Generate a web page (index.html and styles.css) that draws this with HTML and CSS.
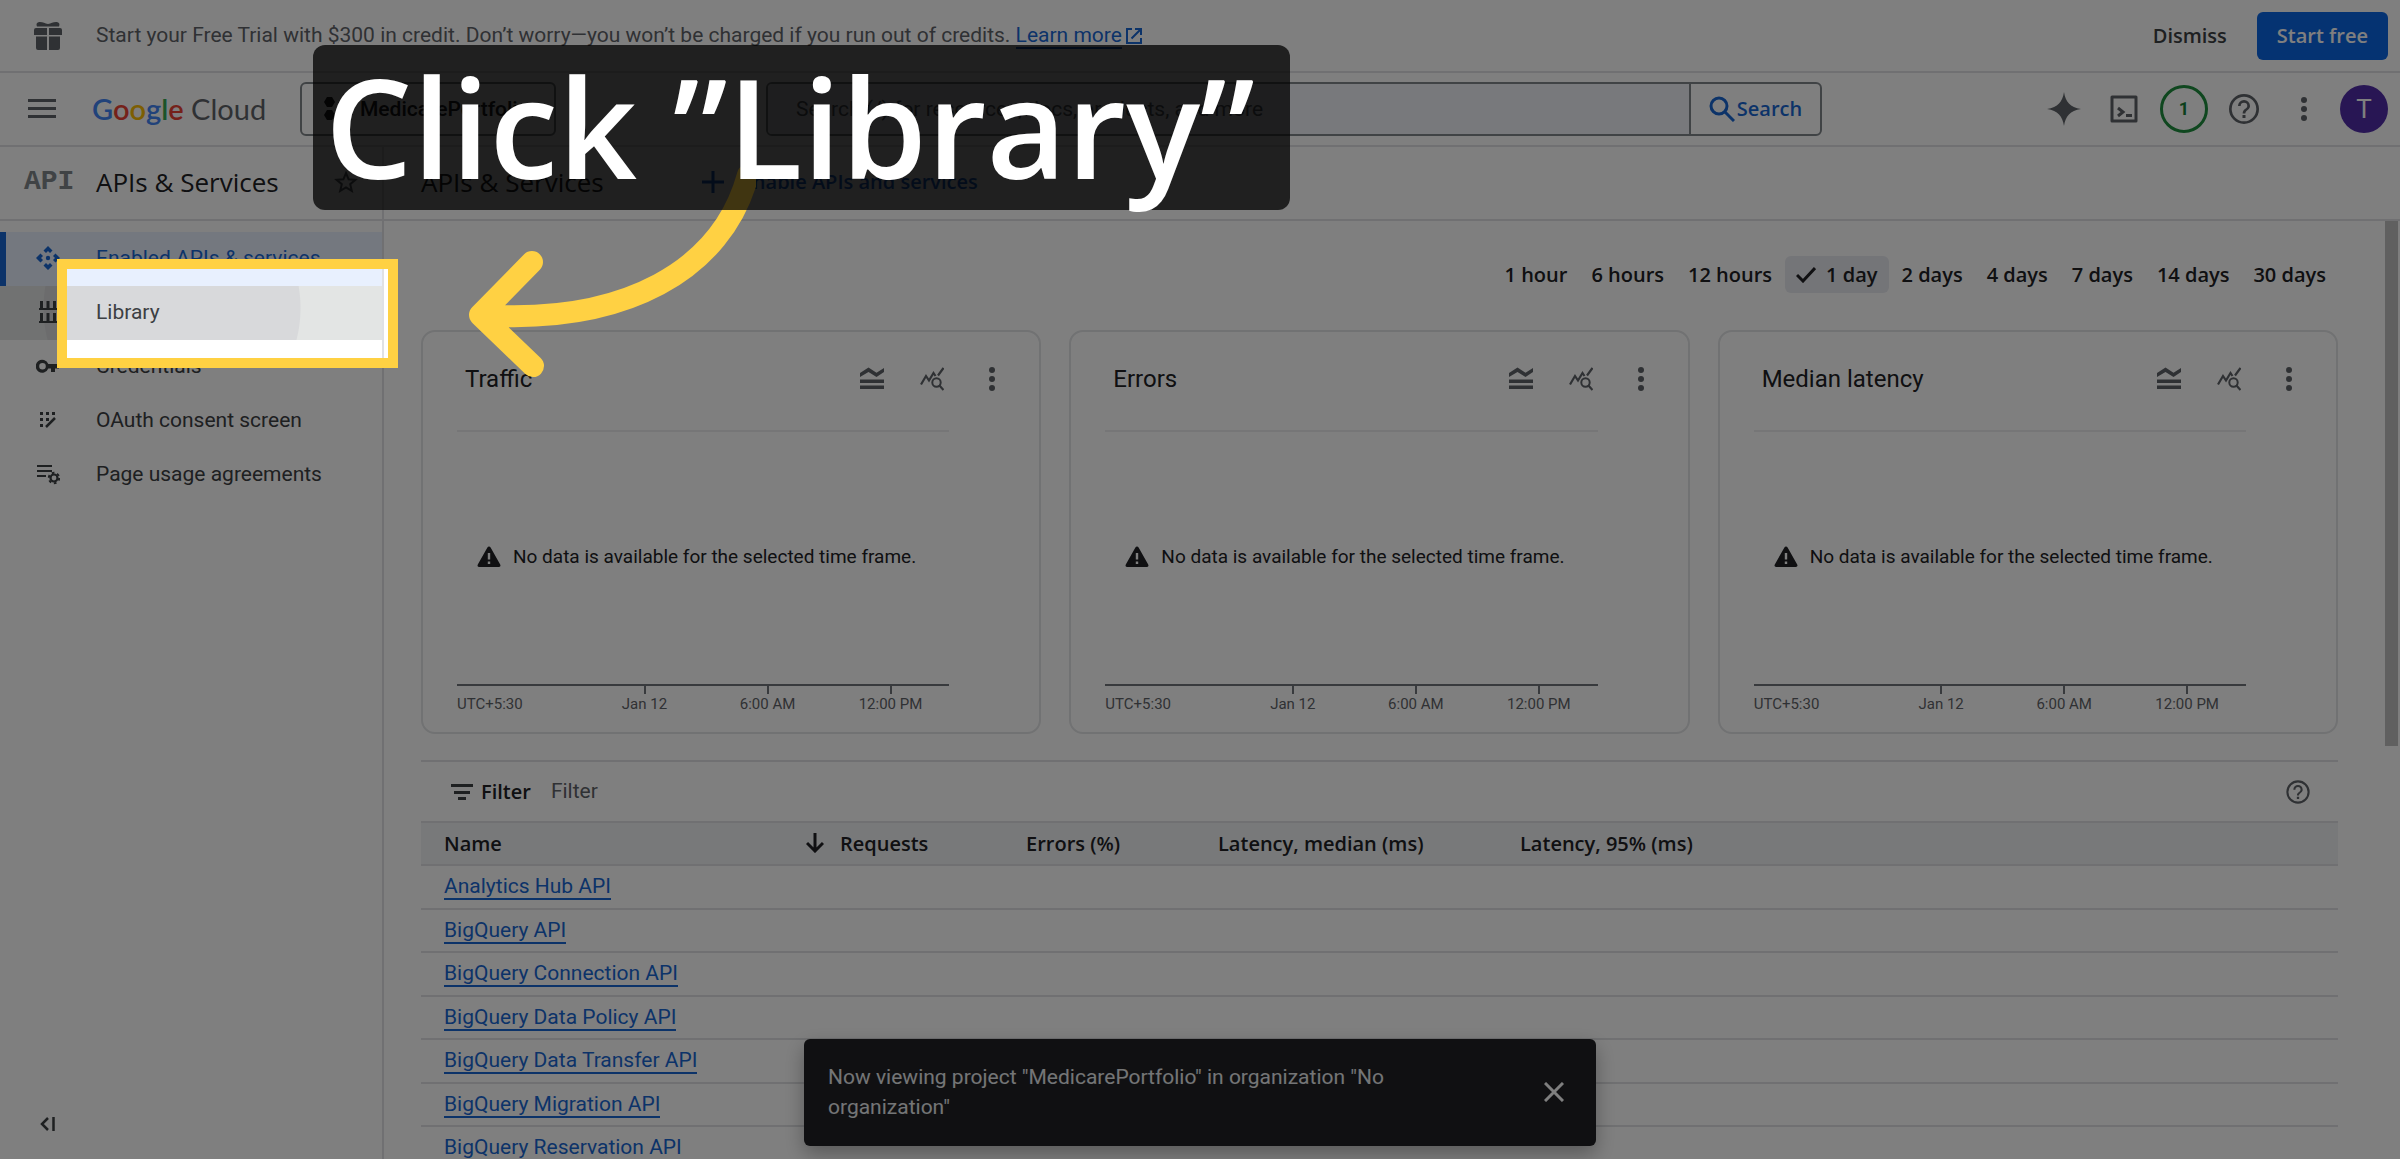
FILE: index.html
```html
<!DOCTYPE html>
<html lang="en">
<head>
<meta charset="utf-8">
<title>APIs &amp; Services – Google Cloud</title>
<meta name="viewport" content="width=device-width, initial-scale=1">
<link rel="stylesheet" href="styles.css">
</head>
<body>
<svg class="sprite" aria-hidden="true">
  <symbol id="i-dots" viewBox="0 0 24 24"><circle cx="12" cy="6" r="2"/><circle cx="12" cy="12" r="2"/><circle cx="12" cy="18" r="2"/></symbol>
  <symbol id="i-help" viewBox="0 0 24 24"><path d="M11 18h2v-2h-2v2zm1-16a10 10 0 1 0 0 20 10 10 0 0 0 0-20zm0 18.200a8.200 8.200 0 1 1 0-16.400 8.200 8.200 0 0 1 0 16.400zM12 6a4 4 0 0 0-4 4h1.800a2.200 2.200 0 1 1 4.400 0c0 2-3.100 1.800-3.100 5h1.800c0-2.200 3.100-2.500 3.100-5a4 4 0 0 0-4-4z"/></symbol>
  <symbol id="i-legend" viewBox="0 0 24 24"><path d="M0 6 8.500 .500l8 5.200L24 1v4l-7.500 5-8-5L0 10zM0 12.500h24V16H0zM0 18.500h24V22H0z"/></symbol>
  <symbol id="i-explore" viewBox="0 0 24 24"><path fill="none" stroke="currentColor" stroke-width="2.200" d="M1 17.500 6 9l3 4.500 4.500-7.500 2 3M18 8.500 23.500 1"/><circle cx="16.500" cy="15.500" r="4.200" fill="none" stroke="currentColor" stroke-width="2"/><path d="m19 18 4.500 5" stroke="currentColor" stroke-width="2.200"/></symbol>
  <symbol id="i-warn" viewBox="0 0 24 24"><path d="M12 1.500c.7 0 1.200.4 1.600 1l9.600 17c.7 1.300.1 2.500-1.400 2.500H2.200C.7 22 .1 20.800.8 19.500l9.600-17c.4-.6.900-1 1.600-1z"/><path fill="#fff" d="M10.800 8h2.400v6.500h-2.400zM10.800 16.500h2.400V19h-2.400z"/></symbol>
</svg>

<div class="app">
  <div class="banner">
    <svg class="gift" viewBox="0 0 28 28" width="28" height="28"><path d="M0 8a2 2 0 0 1 2-2h11v7H0zM15 6h11a2 2 0 0 1 2 2v5H15zM2 14.500h11V28H4a2 2 0 0 1-2-2zM15 14.500h11V26a2 2 0 0 1-2 2h-9zM3 4.500C1.500 1 4 0 6 0c3 0 5 1.500 8 2 3-.5 5-2 8-2 2 0 4.500 1 3 4.500z"/></svg>
    <p class="banner-text">Start your Free Trial with $300 in credit. Don’t worry—you won’t be charged if you run out of credits. <a href="#" class="link">Learn more</a><svg class="ext" viewBox="0 0 16 16" width="16" height="16"><path fill="none" stroke="currentColor" stroke-width="2" d="M6 1H1v14h14v-5M9 1h6v6M15 1 5.500 10.500"/></svg></p>
    <button class="text-btn">Dismiss</button>
    <button class="primary-btn">Start free</button>
  </div>

  <header class="topbar">
    <button class="icon-btn menu-btn" aria-label="Main menu"><svg viewBox="0 0 28 20" width="28" height="20"><path d="M0 0h28v3H0zM0 8h28v3H0zM0 16h28v3H0z"/></svg></button>
    <a class="logo" href="#"><span class="b">G</span><span class="r">o</span><span class="y">o</span><span class="b">g</span><span class="g">l</span><span class="r">e</span> <span class="cloud">Cloud</span></a>
    <button class="project"><svg viewBox="0 0 26 24" width="26" height="24"><path d="M3 0h5l3 5-3 5H3L0 5zM3 13h5l3 5-3 5H3l-3-5zM15 6.500h5l3 5-3 5h-5l-3-5z"/></svg>MedicarePortfolio</button>
    <form class="search">
      <input type="search" aria-label="Search" placeholder="Search (/) for resources, docs, products, and more">
      <button type="button"><svg viewBox="0 0 26 26" width="26" height="26"><circle cx="10" cy="10" r="8" fill="none" stroke="currentColor" stroke-width="3"/><path d="m16 16 9 9" stroke="currentColor" stroke-width="3"/></svg>Search</button>
    </form>
    <div class="tools">
      <button class="tool" aria-label="Gemini"><svg viewBox="0 0 34 34" width="34" height="34"><path d="M17 0c1.500 9.500 6 15.500 17 17-11 1.500-15.500 7.500-17 17C15.500 24.500 11 18.500 0 17c11-1.500 15.500-7.500 17-17z"/></svg></button>
      <button class="tool" aria-label="Cloud Shell"><svg viewBox="0 0 28 28" width="28" height="28"><path fill="none" stroke="currentColor" stroke-width="3" stroke-linejoin="round" d="M2 2h24v24H2z"/><path fill="none" stroke="currentColor" stroke-width="3" d="m8 13 5 4-5 4M16 20.500h6"/></svg></button>
      <button class="tool count" aria-label="Notifications">1</button>
      <button class="tool" aria-label="Help"><svg width="36" height="36"><use href="#i-help"/></svg></button>
      <button class="tool" aria-label="More"><svg width="36" height="36"><use href="#i-dots"/></svg></button>
      <button class="tool avatar" aria-label="Account">T</button>
    </div>
  </header>

  <div class="shell">
    <aside class="sidebar">
      <div class="side-head">
        <span class="api-mark">API</span>
        <h2>APIs &amp; Services</h2>
        <button class="icon-btn" aria-label="Pin"><svg viewBox="0 0 24 24" width="24" height="24"><path fill="none" stroke="currentColor" stroke-width="2" d="m12 3 2.600 6.300 6.800.5-5.200 4.400 1.600 6.600L12 17.300l-5.800 3.500 1.600-6.600-5.200-4.400 6.800-.5z"/></svg></button>
      </div>
      <nav>
        <a href="#" class="active"><svg viewBox="0 0 24 24"><path d="m12 0 4.500 4.500-2.500 2.500-2-2-2 2-2.500-2.500zM24 12l-4.500 4.500L17 14l2-2-2-2 2.500-2.500zM12 24l-4.500-4.500L10 17l2 2 2-2 2.500 2.500zM0 12l4.500-4.500L7 10l-2 2 2 2-2.500 2.500z"/><circle cx="12" cy="12" r="2.200"/></svg>Enabled APIs &amp; services</a>
        <a href="#" class="hovered"><svg viewBox="0 0 24 24"><path d="M3 8h18v2H3zM4 1h3v7H4zM10.500 1h3v7h-3zM17 1h3v7h-3zM3 21h18v2H3zM4 13h3v8H4zM10.500 13h3v8h-3zM17 13h3v8h-3z"/></svg>Library</a>
        <a href="#"><svg viewBox="0 0 24 24"><path fill-rule="evenodd" d="M12.300 10a6.500 6.500 0 1 0 0 4.500H15V18h4v-3.500h4V10zM6.500 15.500a3.300 3.300 0 1 1 0-6.600 3.300 3.300 0 0 1 0 6.600z"/></svg>Credentials</a>
        <a href="#"><svg viewBox="0 0 24 24"><path d="M4 4h3v3H4zM10 4h3v3h-3zM16 4h3v3h-3zM4 10h3v3H4zM10 10h3v3h-3zM4 16h3v3H4z"/><path d="m10 19 9-9" stroke="currentColor" stroke-width="2.500"/></svg>OAuth consent screen</a>
        <a href="#"><svg viewBox="0 0 24 24"><path d="M1 3h15v2H1zM1 8h15v2H1zM1 13h9v2H1z"/><circle cx="18" cy="16" r="3.500" fill="none" stroke="currentColor" stroke-width="2.200"/><circle cx="18" cy="16" r="5.200" fill="none" stroke="currentColor" stroke-width="2" stroke-dasharray="2.700 2.700"/></svg>Page usage agreements</a>
      </nav>
      <button class="icon-btn collapse" aria-label="Collapse menu"><svg viewBox="0 0 16 14" width="16" height="14"><path fill="none" stroke="currentColor" stroke-width="2.500" d="M8 1 2 7l6 6M13.500 0v14"/></svg></button>
    </aside>

    <main>
      <div class="page-head">
        <h1>APIs &amp; Services</h1>
        <button class="enable"><svg viewBox="0 0 22 22" width="22" height="22"><path d="M0 9.500h22v3H0zM9.500 0h3v22h-3z"/></svg>Enable APIs and services</button>
      </div>
      <div class="scroll">
        <div class="content">
          <div class="ranges">
            <button>1 hour</button><button>6 hours</button><button>12 hours</button><button class="on"><svg viewBox="0 0 20 16" width="20" height="16"><path fill="none" stroke="currentColor" stroke-width="3" d="m1 8 6 6L19 1"/></svg>1 day</button><button>2 days</button><button>4 days</button><button>7 days</button><button>14 days</button><button>30 days</button>
          </div>
          <div class="cards">
            <section class="card">
              <div class="card-head"><h3>Traffic</h3><button class="icon-btn" aria-label="Legend"><svg><use href="#i-legend"/></svg></button><button class="icon-btn" aria-label="Explore"><svg><use href="#i-explore"/></svg></button><button class="icon-btn more" aria-label="More"><svg><use href="#i-dots"/></svg></button></div>
              <div class="plot"><svg><use href="#i-warn"/></svg>No data is available for the selected time frame.</div>
              <div class="axis"><span>UTC+5:30</span><span class="tick">Jan 12</span><span class="tick">6:00 AM</span><span class="tick">12:00 PM</span></div>
            </section>
            <section class="card">
              <div class="card-head"><h3>Errors</h3><button class="icon-btn" aria-label="Legend"><svg><use href="#i-legend"/></svg></button><button class="icon-btn" aria-label="Explore"><svg><use href="#i-explore"/></svg></button><button class="icon-btn more" aria-label="More"><svg><use href="#i-dots"/></svg></button></div>
              <div class="plot"><svg><use href="#i-warn"/></svg>No data is available for the selected time frame.</div>
              <div class="axis"><span>UTC+5:30</span><span class="tick">Jan 12</span><span class="tick">6:00 AM</span><span class="tick">12:00 PM</span></div>
            </section>
            <section class="card">
              <div class="card-head"><h3>Median latency</h3><button class="icon-btn" aria-label="Legend"><svg><use href="#i-legend"/></svg></button><button class="icon-btn" aria-label="Explore"><svg><use href="#i-explore"/></svg></button><button class="icon-btn more" aria-label="More"><svg><use href="#i-dots"/></svg></button></div>
              <div class="plot"><svg><use href="#i-warn"/></svg>No data is available for the selected time frame.</div>
              <div class="axis"><span>UTC+5:30</span><span class="tick">Jan 12</span><span class="tick">6:00 AM</span><span class="tick">12:00 PM</span></div>
            </section>
          </div>
          <div class="filter">
            <svg viewBox="0 0 22 16" width="22" height="16"><path d="M0 0h22v3H0zM3 7h16v3H3zM7 13h8v3H7z"/></svg>
            <label for="filter">Filter</label>
            <input id="filter" type="text" placeholder="Filter">
            <button class="icon-btn" aria-label="Help"><svg width="28" height="28"><use href="#i-help"/></svg></button>
          </div>
          <table>
            <colgroup><col class="c-name"><col class="c-req"><col class="c-err"><col class="c-med"><col></colgroup>
            <thead><tr><th>Name</th><th><svg viewBox="0 0 18 20" width="18" height="20"><path fill="none" stroke="currentColor" stroke-width="3" d="M9 0v18M1 10l8 8 8-8"/></svg>Requests</th><th>Errors (%)</th><th>Latency, median (ms)</th><th>Latency, 95% (ms)</th></tr></thead>
            <tbody>
              <tr><td><a href="#" class="link">Analytics Hub API</a></td><td></td><td></td><td></td><td></td></tr>
              <tr><td><a href="#" class="link">BigQuery API</a></td><td></td><td></td><td></td><td></td></tr>
              <tr><td><a href="#" class="link">BigQuery Connection API</a></td><td></td><td></td><td></td><td></td></tr>
              <tr><td><a href="#" class="link">BigQuery Data Policy API</a></td><td></td><td></td><td></td><td></td></tr>
              <tr><td><a href="#" class="link">BigQuery Data Transfer API</a></td><td></td><td></td><td></td><td></td></tr>
              <tr><td><a href="#" class="link">BigQuery Migration API</a></td><td></td><td></td><td></td><td></td></tr>
              <tr><td><a href="#" class="link">BigQuery Reservation API</a></td><td></td><td></td><td></td><td></td></tr>
            </tbody>
          </table>
        </div>
        <div class="scrollbar"></div>
      </div>
    </main>
  </div>

  <div class="toast" role="status">
    <p>Now viewing project "MedicarePortfolio" in organization "No organization"</p>
    <button class="icon-btn" aria-label="Close"><svg viewBox="0 0 20 20" width="20" height="20"><path fill="none" stroke="currentColor" stroke-width="3" d="m1 1 18 18M19 1 1 19"/></svg></button>
  </div>

  <div class="spotlight"></div>
  <svg class="arrow" viewBox="0 0 300 220" width="300" height="220"><path d="M24 155C170 165 266 110 292 15M76 102 24 155l53 51"/></svg>
  <div class="caption">Click ”Library”</div>
</div>
</body>
</html>
```
FILE: styles.css
```css
* { box-sizing: border-box; }
body { margin: 0; background: #fff; color: #202124; font: 21px/30px Roboto, "Noto Sans", sans-serif; }
h1, h2, h3, p { margin: 0; font-weight: 400; }
button { font: inherit; color: inherit; background: none; border: 0; padding: 0; display: flex; align-items: center; flex: none; }
input { font: inherit; border: 0; background: none; padding: 0; min-width: 0; outline: 0; }
svg { fill: currentColor; flex: none; }
a { color: inherit; text-decoration: none; }
.sprite { position: absolute; width: 0; height: 0; }
.link { color: #1967d2; border-bottom: 2px solid #1967d2; }
.icon-btn { justify-content: center; color: #5f6368; }

.app { position: relative; display: flex; flex-direction: column; height: 100vh; overflow: hidden; }

/* Free trial banner */
.banner { display: flex; align-items: center; height: 73px; flex: none; padding: 0 12px 0 34px; border-bottom: 2px solid #e0e1e4; color: #5f6368; }
.gift { margin-right: 34px; }
.banner-text { flex: 1; white-space: nowrap; line-height: 24px; padding-bottom: 2px; }
.ext { color: #1967d2; margin-left: 4px; vertical-align: -2px; }
.text-btn, .primary-btn { font: 600 20px/30px "Open Sans", sans-serif; color: #3c4043; }
.text-btn { margin-right: 30px; }
.primary-btn { height: 48px; padding: 0 20px; border-radius: 6px; background: #0b66e4; color: #fff; }

/* Top bar */
.topbar { display: flex; align-items: center; height: 74px; flex: none; padding: 0 12px 0 28px; border-bottom: 2px solid #e0e1e4; }
.menu-btn { width: 28px; margin-right: 36px; }
.logo { width: 208px; font: 400 29px/40px Lato, sans-serif; white-space: nowrap; }
.logo .b { color: #4285f4; } .logo .r { color: #ea4335; } .logo .y { color: #fbbc04; } .logo .g { color: #34a853; }
.logo .cloud { color: #5f6368; }
.logo span:not(.cloud) { font-weight: 600; }
.project { height: 54px; width: 256px; padding-left: 22px; gap: 10px; border: 2px solid #80868b; border-radius: 6px; font-weight: 500; }
.search { display: flex; height: 54px; width: 1056px; margin-left: 210px; border: 2px solid #80868b; border-radius: 6px; }
.search input { flex: 1; padding-left: 28px; background: #f1f3f8; border-radius: 4px 0 0 4px; }
.search input::placeholder { color: #5f6368; opacity: 1; }
.search button { width: 131px; justify-content: center; gap: 2px; border-left: 2px solid #80868b; color: #1967d2; font: 600 20px/30px "Open Sans", sans-serif; }
.tools { display: flex; gap: 12px; margin-left: auto; }
.tool { width: 48px; height: 48px; justify-content: center; color: #5f6368; }
.count { border: 3px solid #1e8e3e; border-radius: 50%; color: #188038; font-size: 18px; font-weight: 700; }
.avatar { border-radius: 50%; background: #512da8; color: #fff; font-size: 26px; }

.shell { display: flex; flex: 1; min-height: 0; }

/* Navigation */
.sidebar { display: flex; flex-direction: column; width: 384px; flex: none; border-right: 2px solid #e0e1e4; }
.side-head { display: flex; align-items: center; height: 74px; flex: none; padding: 0 0 2px 24px; border-bottom: 2px solid #e0e1e4; }
.api-mark { width: 72px; font: 700 28px/30px "Liberation Mono", monospace; color: #80868b; }
h1, h2 { font: 400 26px/36px "Open Sans", sans-serif; }
.side-head .icon-btn { margin-left: auto; margin-right: 24px; }
nav { padding-top: 11px; }
nav a { display: flex; align-items: center; gap: 36px; height: 54px; padding: 0 0 2px 36px; color: #3c4043; }
nav svg { width: 24px; height: 24px; }
nav .active { background: #e8f0fe; color: #1967d2; box-shadow: inset 6px 0 #1967d2; }
nav .hovered { background: radial-gradient(circle 129px at 172px 22px, #d8d9db 128px, #e3e5e4 129px); }
.collapse { margin: auto auto 28px 40px; color: #3c4043; }

/* Page */
main { flex: 1; min-width: 0; display: flex; flex-direction: column; }
.page-head { display: flex; align-items: center; gap: 98px; height: 74px; flex: none; padding: 0 0 2px 37px; border-bottom: 2px solid #e0e1e4; }
.enable { gap: 18px; color: #1967d2; font: 600 20px/30px "Open Sans", sans-serif; }
.scroll { display: flex; flex: 1; min-height: 0; }
.content { flex: 1; min-width: 0; padding: 35px 47px 0 37px; overflow: hidden; }
.scrollbar { width: 13px; height: 525px; margin-right: 2px; background: #c1c1c1; flex: none; }
.ranges { display: flex; justify-content: flex-end; gap: 2px; padding-right: 1px; font: 600 20px/37px "Open Sans", sans-serif; }
.ranges button { height: 37px; padding: 0 11px; gap: 10px; border-radius: 6px; }
.ranges .on { background: #e8eaf0; }

.cards { display: grid; grid-template-columns: repeat(3, minmax(0, 1fr)); gap: 28px; margin-top: 37px; }
.card { padding: 0 90px 12px 34px; border: 2px solid #e3e4e6; border-radius: 14px; }
.card-head { display: flex; align-items: center; height: 98px; margin-right: -55px; padding: 0 0 4px 8px; gap: 36px; }
.card-head h3 { flex: 1; font-size: 24px; }
.card-head svg { width: 24px; height: 24px; }
.card-head .more { margin: 0 -6px; }
.card-head .more svg { width: 36px; height: 36px; }
.plot { display: flex; align-items: center; gap: 12px; height: 256px; padding: 0 0 3px 20px; border-top: 2px solid #ececee; border-bottom: 2px solid #70757a; font-size: 19px; white-space: nowrap; }
.plot svg { width: 24px; height: 24px; }
.axis { display: grid; grid-template-columns: 126px 123px 123px 1fr; height: 34px; font: 15px/36px Roboto, sans-serif; color: #5f6368; white-space: nowrap; }
.tick { display: flex; justify-content: center; width: 123px; background: linear-gradient(#70757a, #70757a) center top / 2px 8px no-repeat; }

/* API table */
.filter { display: flex; align-items: center; height: 61px; margin-top: 26px; padding: 0 26px 0 30px; border-top: 2px solid #e0e1e4; color: #3c4043; }
.filter label { margin: 0 20px 0 8px; font: 600 20px/30px "Open Sans", sans-serif; color: #202124; }
.filter input { flex: 1; padding-bottom: 2px; }
.filter input::placeholder { color: #5f6368; opacity: 1; }
table { width: 100%; table-layout: fixed; border-collapse: collapse; white-space: nowrap; }
.c-name { width: 385px; } .c-req { width: 211px; } .c-err { width: 192px; } .c-med { width: 302px; }
th { height: 43px; padding: 0 0 0 23px; text-align: left; font: 600 20px/30px "Open Sans", sans-serif; background: #f0f2f5; border: solid #e0e1e4; border-width: 2px 0; }
th:nth-child(2) { padding-left: 0; }
th:nth-child(n+3) { padding-left: 9px; }
th svg { margin-right: 16px; vertical-align: -2px; }
td { height: 43px; padding: 0 0 2px 23px; border-bottom: 2px solid #e0e1e4; line-height: 24px; }
tr:nth-child(odd) td { height: 44px; }

/* Snackbar */
.toast { position: absolute; left: 50%; bottom: 13px; width: 792px; margin-left: -396px; min-height: 107px; display: flex; align-items: center; justify-content: space-between; padding: 0 32px 2px 24px; border-radius: 6px; background: #202124; color: #e8eaed; box-shadow: 0 8px 20px rgba(0, 0, 0, .3); }
.toast p { width: 580px; }
.toast .icon-btn { color: #fff; }

/* Tutorial overlay */
.spotlight { position: absolute; left: 57px; top: 259px; width: 341px; height: 109px; border: 10px solid #ffd143; box-shadow: 0 0 0 3000px rgba(0, 0, 0, .5); }
.arrow { position: absolute; left: 456px; top: 160px; }
.arrow path { fill: none; stroke: #ffd143; stroke-width: 22px; stroke-linecap: round; stroke-linejoin: round; }
.caption { position: absolute; left: 313px; top: 45px; width: 977px; height: 165px; padding-left: 12px; border-radius: 12px; background: rgba(0, 0, 0, .75); color: #fff; font: 600 138px/161px "Open Sans", sans-serif; white-space: nowrap; }
```
